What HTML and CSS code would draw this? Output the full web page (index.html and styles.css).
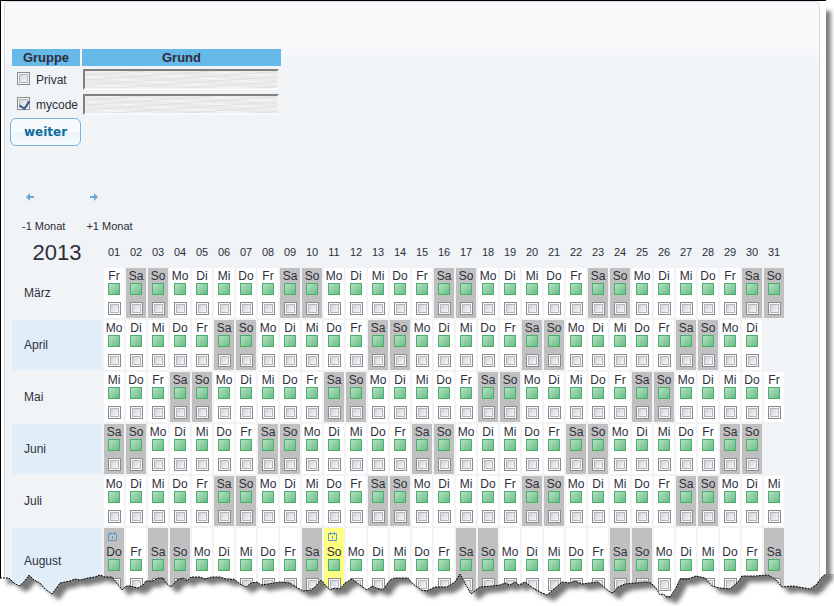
FILE: index.html
```html
<!DOCTYPE html>
<html lang="de">
<head>
    <meta charset="UTF-8">
    <meta name="viewport" content="width=device-width, initial-scale=1.0">
    <title>Kalender 2013</title>
    <link rel="stylesheet" href="styles.css">
</head>
<body>
    <div class="sheet">
        <main class="panel">
            <form class="groups">
                <table class="group-table">
                    <thead>
                        <tr><th>Gruppe</th><th>Grund</th></tr>
                    </thead>
                    <tbody>
                        <tr>
                            <td><label class="group"><input type="checkbox" class="check"> Privat</label></td>
                            <td><input type="text" class="reason" aria-label="Grund Privat"></td>
                        </tr>
                        <tr>
                            <td><label class="group"><input type="checkbox" class="check" checked> mycode</label></td>
                            <td><input type="text" class="reason" aria-label="Grund mycode"></td>
                        </tr>
                    </tbody>
                </table>
                <button type="button" class="btn">weiter</button>
            </form>
            <nav class="months-nav">
                <a href="#prev">
                    <svg class="arrow" viewBox="0 0 8 8"><path d="M4 0 0 4l4 4V5h4V3H4z"/></svg>
                    <span>-1 Monat</span>
                </a>
                <a href="#next">
                    <svg class="arrow" viewBox="0 0 8 8"><path d="M4 0l4 4-4 4V5H0V3h4z"/></svg>
                    <span>+1 Monat</span>
                </a>
            </nav>
            <table class="calendar">
                <thead><tr id="days"><th class="year">2013</th></tr></thead>
                <tbody id="months"></tbody>
            </table>
        </main>
    </div>
    <svg class="tear" viewBox="0 0 834 42" preserveAspectRatio="none" aria-hidden="true">
        <defs>
            <clipPath id="below"><path id="below-path"/></clipPath>
            <filter id="soft" x="-5%" y="-50%" width="110%" height="200%"><feGaussianBlur stdDeviation="2"/></filter>
        </defs>
        <g clip-path="url(#below)">
            <rect class="ground" width="834" height="42"/>
            <g filter="url(#soft)"><path id="shade" class="shade" transform="translate(7 6)"/></g>
        </g>
        <path id="edge" class="edge"/>
    </svg>
    <script src="script.js"></script>
</body>
</html>
```
FILE: styles.css
```css
* { margin: 0; padding: 0; box-sizing: border-box; }
body { font-family: Arial, "Liberation Sans", sans-serif; font-size: 12px; color: #2e2e3a; background: #fff; overflow: hidden; }
.sheet { margin-right: 8px; padding: 0 6px 0 3px; border-top: 1px solid #000; border-left: 1px solid #000; background: #fff; box-shadow: 5px 11px 4px #808080; }
.panel { padding: 46px 5px 0; border: 1px solid #d9dce3; border-bottom: 0; border-radius: 5px 5px 0 0; background: linear-gradient(#f9fafc 0, #f8f9fb 44px, #f0f4f7 64px); }
.group-table { border-spacing: 2px; margin: -1px 0 0; }
.group-table th { height: 17px; background: #66b9e9; color: #2e2e3a; font-size: 13px; line-height: 17px; text-align: center; }
.group-table th:first-child { width: 68px; }
.group-table th:last-child { width: 199px; }
.group-table td { height: 23px; }
.group { display: flex; align-items: center; gap: 6px; padding: 1px 0 0 5px; white-space: nowrap; }
.reason { display: block; width: 196px; height: 21px; margin-left: 1px; padding: 0 4px; border: 2px solid #808080; border-right-color: #f4f4f4; border-bottom-color: #fafafa; font: inherit; background: repeating-linear-gradient(176deg, transparent 0 3px, #dfdfdf 4px, transparent 5px), repeating-linear-gradient(184deg, #ebebeb 0 4px, #f6f6f6 5px, #ebebeb 7px); }
.check { appearance: none; display: block; flex: none; width: 13px; height: 13px; border: 1px solid #8a8b8d; background: linear-gradient(135deg, #c5cad3, #f6f6f6 80%); box-shadow: inset 0 0 0 1px #f8f8f8, inset 0 0 0 2px #b4b8be; }
.group .check { margin-bottom: 3px; }
.check:checked::before { content: ""; display: block; width: 5px; height: 8px; margin: 1px 0 0 3px; border: solid #3d578f; border-width: 0 2px 2px 0; transform: rotate(35deg); }
.btn { display: block; width: 71px; height: 28px; border: 1px solid #77b4e6; border-radius: 6px; background: linear-gradient(#f8fbfd 50%, #ecf5fb 50%, #f6fafd); color: #0b6b9c; font: bold 12px "DejaVu Sans", Verdana, sans-serif; cursor: pointer; }
.months-nav { display: flex; gap: 21px; padding: 47px 0 0 12px; font-size: 11px; line-height: 13px; }
.months-nav a { color: inherit; text-decoration: none; }
.arrow { display: block; width: 8px; height: 8px; margin: 0 0 19px 4px; fill: #6fa5cf; }
.calendar { border-spacing: 2px; margin-top: 3px; }
.calendar thead th { width: 20px; height: 28px; font-size: 11px; font-weight: normal; line-height: 13px; text-align: center; }
.calendar thead .year { width: 90px; font-size: 22px; }
.calendar tbody th { width: 90px; padding-left: 12px; font-weight: normal; text-align: left; }
.calendar tr:nth-child(even) th { background: #e1eef8; }
.calendar td { width: 20px; height: 50px; background: #fff; vertical-align: top; }
.calendar .off { background: #c0c0c0; }
.calendar .today { background: #ffff80; }
.name { display: block; width: 20px; height: 15px; line-height: 17px; text-align: center; }
.free { display: block; width: 12px; height: 12px; margin: 0 4px 7px; border: 1px solid #48b06c; background: linear-gradient(135deg, #b4e2c1, #69bd87); }
.calendar .check { margin: 0 3px 3px 4px; }
.slot { display: block; height: 16px; padding: 4px 0 0 4px; }
.marker { display: block; width: 9px; height: 9px; fill: none; stroke: #5c9ccc; }
.tear { display: block; position: relative; width: 100%; height: 42px; margin-top: -32px; }
.ground { fill: #fff; }
.shade { fill: #777; }
.edge { fill: none; stroke: #000; stroke-dasharray: 2 1; }
```
FILE: script.js
```js
const names = ['So', 'Mo', 'Di', 'Mi', 'Do', 'Fr', 'Sa'];
const months = ['März', 'April', 'Mai', 'Juni', 'Juli', 'August'];
const marked = { '7-1': 'off', '7-11': 'today' };
const marker = '<svg class="marker" viewBox="0 0 9 9"><path d="M.5 1.5h8v7h-8zM2.5 0v3M6.5 0v3M4.5 4v3"/></svg>';

for (let d = 1; d <= 31; d++) {
    document.getElementById('days').insertAdjacentHTML('beforeend', `<th>${String(d).padStart(2, '0')}</th>`);
}

months.forEach((month, i) => {
    const m = i + 2;
    const count = new Date(2013, m + 1, 0).getDate();
    let row = `<th>${month}</th>`;
    for (let d = 1; d <= count; d++) {
        const day = new Date(2013, m, d).getDay();
        const mark = marked[`${m}-${d}`];
        const type = mark || (day === 0 || day === 6 ? 'off' : '');
        // August has an extra line for the holiday markers
        const slot = m === 7 ? `<span class="slot">${mark ? marker : ''}</span>` : '';
        row += `<td class="${type}">${slot}<span class="name">${names[day]}</span><span class="free"></span><input type="checkbox" class="check" aria-label="${d}. ${month}"></td>`;
    }
    document.getElementById('months').insertAdjacentHTML('beforeend', `<tr>${row}</tr>`);
});

// torn bottom edge of the sheet
const tear = '0 14 9 14 14 19 19 22 24 18 29 11 34 16 40 19 45 25 52 30 55 26 60 19 65 18 70 17 75 15 80 16 88 14 95 13 100 11 105 13 112 13 116 18 122 26 126 22 130 22 138 24 143 21 146 17 153 17 158 14 163 14 166 19 171 23 177 16 183 14 187 17 191 13 200 13 205 15 212 13 220 13 228 16 234 15 240 20 246 23 251 19 257 18 261 21 268 20 280 18 290 19 296 23 303 27 311 26 315 23 321 16 327 23 330 26 335 24 340 25 345 19 352 15 360 21 367 26 372 22 376 24 383 26 390 16 394 14 408 14 412 19 421 26 427 27 435 23 447 23 455 18 460 10 466 21 471 30 476 26 480 23 492 22 500 21 505 19 510 21 515 18 519 21 525 18 533 24 540 28 547 31 553 26 562 18 570 19 575 17 582 20 590 19 598 18 604 23 610 28 613 29 618 23 625 20 635 19 646 18 651 19 656 24 660 31 663 30 667 33 670 33 676 24 680 15 688 15 696 12 705 14 712 22 720 24 730 25 738 18 742 12 755 12 768 11 775 15 782 23 793 22 810 25 816 21 822 13 826 10';
document.getElementById('edge').setAttribute('d', `M${tear}`);
document.getElementById('below-path').setAttribute('d', `M${tear}H834V42H0z`);
document.getElementById('shade').setAttribute('d', `M${tear}V-30H0z`);
```
